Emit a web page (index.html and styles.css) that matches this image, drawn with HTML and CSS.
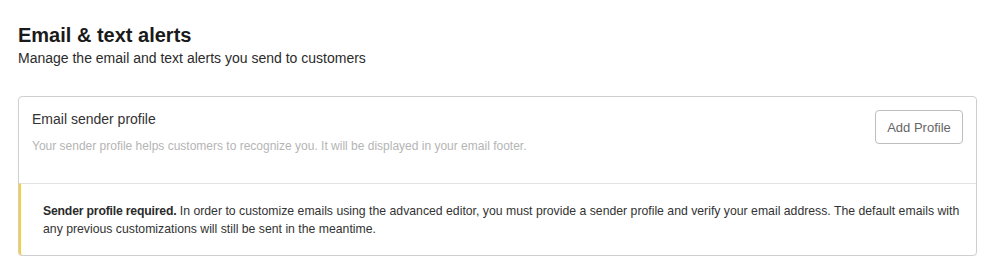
FILE: index.html
```html
<!DOCTYPE html>
<html lang="en">
<head>
<meta charset="utf-8">
<title>Email &amp; text alerts</title>
<link rel="stylesheet" href="styles.css">
</head>
<body>
<div class="page">
  <h1>Email &amp; text alerts</h1>
  <p class="subtitle">Manage the email and text alerts you send to customers</p>

  <div class="card">
    <div class="card-head">
      <div class="card-text">
        <h2>Email sender profile</h2>
        <p class="hint">Your sender profile helps customers to recognize you. It will be displayed in your email footer.</p>
      </div>
      <button class="btn">Add Profile</button>
    </div>
    <div class="alert">
      <p><b>Sender profile required.</b> In order to customize emails using the advanced editor, you must provide a sender profile and verify your email address. The default emails with any previous customizations will still be sent in the meantime.</p>
    </div>
  </div>
</div>
</body>
</html>
```

FILE: styles.css
```css
body {
  margin: 0;
  background: #fff;
  font-family: "Liberation Sans", Arial, sans-serif;
  color: #333;
}
.page { padding: 23px 22px 0 18px; }
h1 {
  font-size: 20px; font-weight: 700; color: #1a1a1a;
  margin: 0; line-height: 24px;
}
.subtitle {
  font-size: 14px; color: #2b2b2b;
  margin: 1px 0 0; line-height: 20px;
}
.card {
  margin-top: 28px;
  border: 1px solid #cfcfcf; border-radius: 4px;
  box-shadow: 0 1px 1px rgba(0,0,0,0.08);
}
.card-head {
  display: flex; justify-content: space-between; align-items: flex-start;
  padding: 13px 13px 0 13px; height: 73px;
}
.card-head h2 {
  font-size: 14px; font-weight: 400; color: #333;
  margin: 0; line-height: 18px;
}
.hint {
  font-size: 12px; color: #b5b5b5;
  margin: 10px 0 0; line-height: 16px;
}
.btn {
  width: 88px; height: 34px;
  background: #fff; border: 1px solid #bdbdbd; border-radius: 4px;
  font-family: "Liberation Sans", Arial, sans-serif;
  font-size: 13px; color: #666; padding: 0;
}
.alert {
  border-top: 1px solid #e3e3e3;
  border-left: 2px solid #f6cd3b;
  border-radius: 0 0 0 3px;
  padding: 18px 8px 17px 22px;
}
.alert p {
  margin: 0; font-size: 12.25px; line-height: 18px; color: #333;
}
.alert b { font-weight: 700; color: #2a2a2a; letter-spacing: -0.2px; }
```
